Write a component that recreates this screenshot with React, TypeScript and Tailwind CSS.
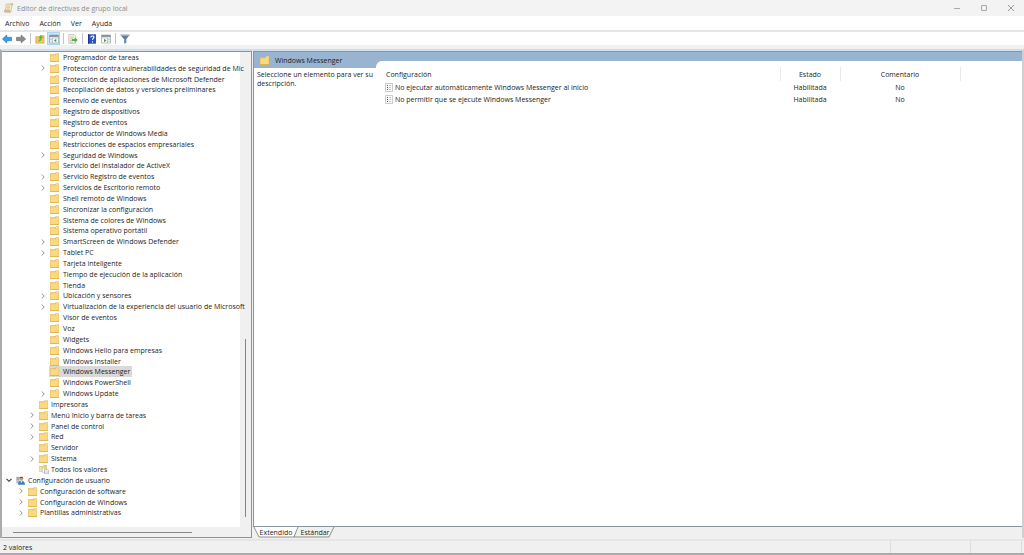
import React from "react";

type Node = {
  label: string;
  level: number;
  arrow?: "closed" | "open";
  icon?: "all" | "user";
  selected?: boolean;
};

const nodes: Node[] = [
  { label: "Programador de tareas", level: 3 },
  { label: "Protección contra vulnerabilidades de seguridad de Mic", level: 3, arrow: "closed" },
  { label: "Protección de aplicaciones de Microsoft Defender", level: 3 },
  { label: "Recopilación de datos y versiones preliminares", level: 3 },
  { label: "Reenvío de eventos", level: 3 },
  { label: "Registro de dispositivos", level: 3 },
  { label: "Registro de eventos", level: 3 },
  { label: "Reproductor de Windows Media", level: 3 },
  { label: "Restricciones de espacios empresariales", level: 3 },
  { label: "Seguridad de Windows", level: 3, arrow: "closed" },
  { label: "Servicio del instalador de ActiveX", level: 3 },
  { label: "Servicio Registro de eventos", level: 3, arrow: "closed" },
  { label: "Servicios de Escritorio remoto", level: 3, arrow: "closed" },
  { label: "Shell remoto de Windows", level: 3 },
  { label: "Sincronizar la configuración", level: 3 },
  { label: "Sistema de colores de Windows", level: 3 },
  { label: "Sistema operativo portátil", level: 3 },
  { label: "SmartScreen de Windows Defender", level: 3, arrow: "closed" },
  { label: "Tablet PC", level: 3, arrow: "closed" },
  { label: "Tarjeta inteligente", level: 3 },
  { label: "Tiempo de ejecución de la aplicación", level: 3 },
  { label: "Tienda", level: 3 },
  { label: "Ubicación y sensores", level: 3, arrow: "closed" },
  { label: "Virtualización de la experiencia del usuario de Microsoft", level: 3, arrow: "closed" },
  { label: "Visor de eventos", level: 3 },
  { label: "Voz", level: 3 },
  { label: "Widgets", level: 3 },
  { label: "Windows Hello para empresas", level: 3 },
  { label: "Windows Installer", level: 3 },
  { label: "Windows Messenger", level: 3, selected: true },
  { label: "Windows PowerShell", level: 3 },
  { label: "Windows Update", level: 3, arrow: "closed" },
  { label: "Impresoras", level: 2 },
  { label: "Menú Inicio y barra de tareas", level: 2, arrow: "closed" },
  { label: "Panel de control", level: 2, arrow: "closed" },
  { label: "Red", level: 2, arrow: "closed" },
  { label: "Servidor", level: 2 },
  { label: "Sistema", level: 2, arrow: "closed" },
  { label: "Todos los valores", level: 2, icon: "all" },
  { label: "Configuración de usuario", level: 0, arrow: "open", icon: "user" },
  { label: "Configuración de software", level: 1, arrow: "closed" },
  { label: "Configuración de Windows", level: 1, arrow: "closed" },
  { label: "Plantillas administrativas", level: 1, arrow: "closed" },
];

const indent = ["pl-[2px]", "pl-[14px]", "pl-[25px]", "pl-[36px]"];

const settings = [
  { name: "No ejecutar automáticamente Windows Messenger al inicio", state: "Habilitada", comment: "No" },
  { name: "No permitir que se ejecute Windows Messenger", state: "Habilitada", comment: "No" },
];

const Folder = () => (
  <svg viewBox="0 0 9 9" className="w-[9px] h-[9px] shrink-0">
    <path d="M0 1.200h5l.8-1H9v8.600H0z" fill="#e3b95c" />
    <path d="M.4 2.200h5.200l.8-.8h2.200v6.800H.4z" fill="#fbd980" />
    <path d="M6.400.6h2.200v1H6z" fill="#f6eccb" />
    <path d="M0 8.200h9v.6H0z" fill="#d9a940" />
  </svg>
);

const AllValues = () => (
  <svg viewBox="0 0 10 9" className="w-[10px] h-[9px] shrink-0">
    <path d="M0 1h4l.8-1H8v7H0z" fill="#e8c777" />
    <path d="M.4 1.800h7.200v4.800H.4z" fill="#fbe3a4" />
    <path d="M3.200 2.800h3.500v4.400H3.200z" fill="#fff" stroke="#999" strokeWidth=".5" />
    <path d="M5.500 4.200h3l1 1v3.500h-4z" fill="#fff" stroke="#888" strokeWidth=".5" />
    <path d="M6.300 6h2.300M6.300 7.300h2.300" stroke="#999" strokeWidth=".5" />
  </svg>
);

const UserIcon = () => (
  <svg viewBox="0 0 9 9" className="w-[9px] h-[9px] shrink-0">
    <path d="M.2.8h3.300v6.700H.2z" fill="#b8bfc8" />
    <path d="M.8 1.800h2M.8 3.200h2" stroke="#6d7784" strokeWidth=".6" />
    <path d="M2 8.800c0-2.600 1-4 3.200-4S9 6.200 9 8.800z" fill="#3d82c4" />
    <path d="M4.600 5l.7 2 .9-2z" fill="#fff" />
    <circle cx="5.300" cy="2.800" r="1.900" fill="#c9a184" />
    <path d="M3.300 2.600C3.300.2 7.300.2 7.300 2.600L5.400 1.800z" fill="#594334" />
  </svg>
);

const Arrow = ({ open }: { open: boolean }) => (
  <svg viewBox="0 0 8 8" className="w-2 h-2" fill="none">
    {open ? (
      <path d="M1.500 2.800L4 5.300l2.500-2.500" stroke="#333" strokeWidth="1.100" />
    ) : (
      <path d="M2.800 1.500L5.200 4 2.800 6.500" stroke="#888" strokeWidth=".9" />
    )}
  </svg>
);

const ScrollIcon = () => (
  <svg viewBox="0 0 10 10" className="w-[10px] h-[10px]">
    <path d="M2.200 1h6L7 8.500H1.200z" fill="#f3e8c8" stroke="#b9a77c" strokeWidth=".5" />
    <path d="M6.800 1c.2-.8 2.200-.8 2 .7H7.500M.4 7.300h5.200c-.2 1 .2 2 .9 2H1.200C.4 9.300.2 8.300.4 7.300z" fill="#dbc389" stroke="#a98f58" strokeWidth=".4" />
    <path d="M3 3h3M2.800 4.500h3M2.600 6h3" stroke="#a9a08c" strokeWidth=".4" />
  </svg>
);

const SettingIcon = () => (
  <svg viewBox="0 0 8 9" className="w-2 h-[9px] shrink-0">
    <path d="M.5.5h7v8h-7z" fill="#fafafa" stroke="#b5b5b5" strokeWidth=".7" />
    <path d="M2 2.500h1M2 4.500h1M2 6.500h1" stroke="#444" strokeWidth=".9" />
    <path d="M4 2.500h2M4 4.500h2M4 6.500h2" stroke="#a8a8a8" strokeWidth=".6" />
  </svg>
);

const Back = () => (
  <svg viewBox="0 0 10 10" className="w-[10px] h-[10px]">
    <path d="M.4 5L4.800 1v2.300h4.800v3.400H4.800V9z" fill="#35a0e8" stroke="#1c74b8" strokeWidth=".6" />
  </svg>
);

const Forward = () => (
  <svg viewBox="0 0 10 10" className="w-[10px] h-[10px]">
    <path d="M9.600 5L5.200 1v2.300H.4v3.400h4.800V9z" fill="#8b8b8b" stroke="#6c6c6c" strokeWidth=".6" />
  </svg>
);

const Up = () => (
  <svg viewBox="0 0 10 10" className="w-[10px] h-[10px]">
    <path d="M.7 2.500h3.500l1-1h4V9.300H.7z" fill="#ecc767" stroke="#c8a552" strokeWidth=".5" />
    <path d="M2.300 7.300C4 7 4.700 6 4.700 4H3.300L5.900 1.300l2.500 2.700H6.800c0 2.300-1.600 4-4.500 3.300z" fill="#5aba3a" />
  </svg>
);

const PanelIcon = () => (
  <svg viewBox="0 0 10 10" className="w-[10px] h-[10px]">
    <path d="M.5 1h9v8h-9z" fill="#fff" stroke="#8a9199" strokeWidth=".6" />
    <path d="M.5 1h9v2h-9z" fill="#8c959f" />
    <path d="M1 4h8M3.500 4v5" stroke="#9aa3ac" strokeWidth=".6" />
    <path d="M1.300 5.500h1.500M1.300 7.200h1.500" stroke="#7a93ad" strokeWidth=".6" />
    <path d="M7.300 4.700v3.600L4.700 6.500z" fill="#43a835" />
  </svg>
);

const ActionPanelIcon = () => (
  <svg viewBox="0 0 10 10" className="w-[10px] h-[10px]">
    <path d="M.5 1h9v8h-9z" fill="#fff" stroke="#8a9199" strokeWidth=".6" />
    <path d="M.5 1h9v2h-9z" fill="#8c959f" />
    <path d="M1 4h8M6.500 4v5" stroke="#9aa3ac" strokeWidth=".6" />
    <path d="M7.300 5.500h1.500M7.300 7.200h1.500" stroke="#7a93ad" strokeWidth=".6" />
    <path d="M3 4.700v3.600l2.600-1.800z" fill="#43a835" />
  </svg>
);

const ExportIcon = () => (
  <svg viewBox="0 0 10 10" className="w-[10px] h-[10px]">
    <path d="M.8.6h5.400l1.500 1.500v7.200H.8z" fill="#fbf7e8" stroke="#a9a58f" strokeWidth=".6" />
    <path d="M2 3h4M2 4.800h3M2 6.600h2.500M2 8.200h3" stroke="#8e8e8e" strokeWidth=".5" />
    <path d="M4 5h2.700V3.300L9.800 6 6.700 8.700V7H4z" fill="#4db83b" />
  </svg>
);

const HelpIcon = () => (
  <svg viewBox="0 0 10 10" className="w-[10px] h-[10px]">
    <path d="M1 .3h8v9.400H1z" fill="#2b55b5" />
    <path d="M1 .3h1.200v9.400H1z" fill="#173a8c" />
    <path d="M3.800 3.400c0-2 3.200-1.900 3.200-.1 0 1.100-1.500 1.300-1.500 2.700M5.500 7.200v1.200" stroke="#fff" strokeWidth="1.100" fill="none" />
  </svg>
);

const FilterIcon = () => (
  <svg viewBox="0 0 10 10" className="w-[10px] h-[10px]">
    <path d="M.3.800h9.400L6.300 5.200v3.600L4 9.800V5.200z" fill="#5f819f" />
    <path d="M.3.800h9.400l-.8 1.100H1.100z" fill="#8badc9" />
    <path d="M4.300 5h.8v3.800l-.8.400z" fill="#8badc9" />
  </svg>
);

const Divider = () => (
  <span className="flex w-1 justify-center">
    <span className="w-px h-[11px] bg-[#c4c4c4]" />
  </span>
);

const ToolButton = ({ label, active, children }: { label: string; active?: boolean; children: React.ReactNode }) => (
  <button
    aria-label={label}
    className={`flex h-[13px] w-[13px] items-center justify-center ${active ? "border border-[#a6d5fa] bg-[#cce8ff]" : ""}`}
  >
    {children}
  </button>
);

const TreeRow = ({ node }: { node: Node }) => (
  <li className={`flex flex-1 min-h-0 items-center ${indent[node.level]}`}>
    <span className="flex w-[10px] shrink-0 justify-center mr-px">
      {node.arrow && (
        <button aria-label={`Expandir ${node.label}`}>
          <Arrow open={node.arrow === "open"} />
        </button>
      )}
    </span>
    <button
      className={`flex h-full items-center pl-px pr-[2px] whitespace-nowrap ${node.selected ? "bg-[#d9d9d9]" : ""}`}
    >
      <span className={node.level === 3 ? "w-[13px]" : "w-3"}>
        {node.icon === "user" ? <UserIcon /> : node.icon === "all" ? <AllValues /> : <Folder />}
      </span>
      {node.label}
    </button>
  </li>
);

const App = () => {
  return (
    <div className="flex flex-col h-screen overflow-hidden bg-[#f0f0f0] text-[7px] leading-[9px] text-[#1c1c1c] font-['Open_Sans','Noto_Sans',sans-serif]">
      {/* Title bar */}
      <header className="flex h-4 shrink-0 items-center bg-[#f3f3f3] pl-1 text-[#8c8c8c]">
        <ScrollIcon />
        <h1 className="ml-[3px]">Editor de directivas de grupo local</h1>
        <div className="ml-auto flex">
          <button aria-label="Minimizar" className="flex w-[27px] justify-center">
            <svg viewBox="0 0 8 8" className="w-2 h-2"><path d="M1 4.500h6" stroke="#aaa" /></svg>
          </button>
          <button aria-label="Maximizar" className="flex w-[27px] justify-center">
            <svg viewBox="0 0 8 8" className="w-2 h-2"><path d="M1.500 1.500h5v5h-5z" stroke="#aaa" fill="none" /></svg>
          </button>
          <button aria-label="Cerrar" className="flex w-[27px] justify-center">
            <svg viewBox="0 0 8 8" className="w-2 h-2"><path d="M1 1l6 6M7 1L1 7" stroke="#999" /></svg>
          </button>
        </div>
      </header>

      {/* Menu */}
      <nav className="flex h-4 shrink-0 items-center gap-[10px] border-b-2 border-[#e5e5e5] bg-white pl-[5px]">
        <button>Archivo</button>
        <button>Acción</button>
        <button>Ver</button>
        <button>Ayuda</button>
      </nav>

      {/* Toolbar */}
      <div className="flex h-[13px] shrink-0 items-center gap-px bg-white">
        <ToolButton label="Atrás"><Back /></ToolButton>
        <ToolButton label="Adelante"><Forward /></ToolButton>
        <Divider />
        <ToolButton label="Subir un nivel"><Up /></ToolButton>
        <ToolButton label="Mostrar árbol" active><PanelIcon /></ToolButton>
        <Divider />
        <ToolButton label="Exportar lista"><ExportIcon /></ToolButton>
        <Divider />
        <ToolButton label="Ayuda"><HelpIcon /></ToolButton>
        <ToolButton label="Mostrar panel"><ActionPanelIcon /></ToolButton>
        <Divider />
        <ToolButton label="Filtro"><FilterIcon /></ToolButton>
      </div>

      <div className="mt-1 flex flex-1 min-h-0 border-l-2 border-r-2 border-t-2 border-l-[#ababab] border-r-[#d0d0d0] border-t-[#cfdfee]">
        {/* Tree */}
        <aside className="flex w-[250px] shrink-0 flex-col border-r border-t border-b border-[#8c949c]">
          <div className="flex flex-1 min-h-0">
            <ul className="flex w-[238px] flex-col bg-white pb-[9px]">
              {nodes.map((node) => (
                <TreeRow key={node.label} node={node} />
              ))}
            </ul>
            <div className="flex flex-1 flex-col pl-[5px]">
              <span className="mt-[287px] mb-[10px] w-px flex-1 bg-[#868686]" />
            </div>
          </div>
          <div className="flex h-[10px] items-center pl-[11px]">
            <span className="h-px w-[179px] bg-[#868686]" />
          </div>
        </aside>

        {/* Detail */}
        <main className="ml-px flex flex-1 min-w-0 flex-col">
          <div className="flex flex-1 min-h-0 border-l border-t border-b border-[#8c949c] bg-white">
            <section className="w-[122px] shrink-0">
              <h2 className="flex h-4 items-center gap-[6px] bg-[#99b4d1] pl-[6px]">
                <Folder />
                Windows Messenger
              </h2>
              <p className="px-[3px] pt-[2px]">Seleccione un elemento para ver su descripción.</p>
            </section>
            <section className="flex flex-1 min-w-0 flex-col">
              <div className="bg-[#99b4d1] pt-[9px]">
                <div className="h-[6px] rounded-tl-[6px] bg-white" />
              </div>
              <table className="w-full table-fixed border-collapse">
                <thead>
                  <tr className="h-[14px]">
                    <th className="w-[404px] border-r border-[#e8e8e8] p-0 pl-[10px] text-left font-normal">Configuración</th>
                    <th className="w-[60px] border-r border-[#e8e8e8] p-0 text-center font-normal">Estado</th>
                    <th className="w-[120px] border-r border-[#e8e8e8] p-0 text-center font-normal">Comentario</th>
                    <th className="p-0" />
                  </tr>
                </thead>
                <tbody>
                  {settings.map((s) => (
                    <tr key={s.name} className="h-3">
                      <td className="p-0 pl-[9px]">
                        <span className="flex items-center gap-[2px]">
                          <SettingIcon />
                          {s.name}
                        </span>
                      </td>
                      <td className="p-0 text-center">{s.state}</td>
                      <td className="p-0 text-center">{s.comment}</td>
                      <td className="p-0" />
                    </tr>
                  ))}
                </tbody>
              </table>
            </section>
          </div>
          {/* Tabs */}
          <div className="relative flex h-[11px] items-center">
            <svg viewBox="0 0 82 11" className="absolute left-0 top-0 w-[82px] h-[11px]">
              <path d="M43 0l-2 10h35l5-10" fill="#f0f0f0" stroke="#777" strokeWidth=".8" />
              <path d="M1 0l5 10h35l4-10" fill="#fff" stroke="#777" strokeWidth=".8" />
            </svg>
            <button className="relative w-[46px]">Extendido</button>
            <button className="relative w-[32px]">Estándar</button>
          </div>
        </main>
      </div>

      {/* Status bar */}
      <footer className="mt-px flex h-4 shrink-0 items-center border-b-2 border-t-2 border-b-[#ababab] border-t-[#e6e6e6] pl-[3px]">
        <span className="flex-1">2 valores</span>
        <span className="h-full w-[80px] border-l border-[#dcdcdc]" />
        <span className="h-full w-[51px] border-l border-[#dcdcdc]" />
        <span className="h-full w-[3px] border-l border-[#dcdcdc]" />
      </footer>
    </div>
  );
};

export default App;
